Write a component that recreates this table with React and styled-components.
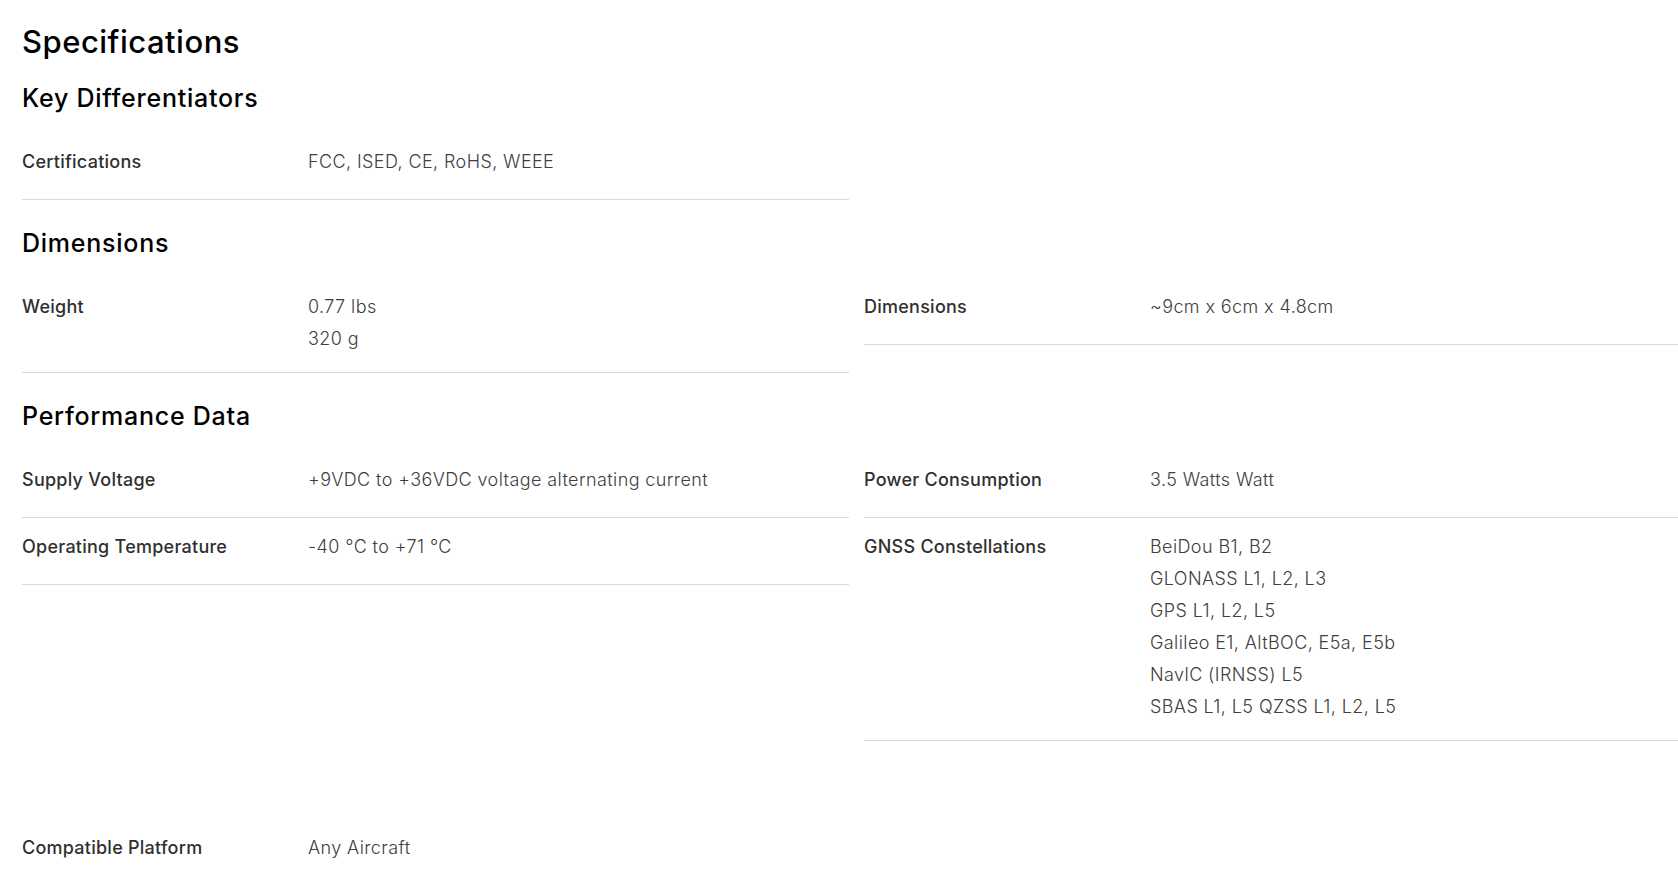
import React from "react";
import styled, { createGlobalStyle } from "styled-components";

const Global = createGlobalStyle`
  html, body { margin: 0; padding: 0; background: #fff; overflow: hidden; }
  body { font-family: Inter, Roboto, "Liberation Sans", sans-serif; }
  * { box-sizing: border-box; }
`;

const Page = styled.main`
  padding: 29px 0 0 22px;
  width: 1678px;
`;

const Title = styled.h2`
  margin: 0;
  font-size: 31px;
  line-height: 26px;
  letter-spacing: 0.5px;
  font-weight: 500;
  color: #000;
`;

const Section = styled.section`
  padding-top: 27px;
`;

const SectionTitle = styled.h3`
  margin: 0 0 19px;
  min-height: 32px;
  font-size: 25px;
  line-height: 32px;
  letter-spacing: 0.75px;
  font-weight: 500;
  color: #000;
`;

const Grid = styled.div`
  display: grid;
  grid-template-columns: 827px 1fr;
  column-gap: 15px;
  align-items: start;
`;

const Row = styled.div`
  display: flex;
  align-items: flex-start;
  padding: 13px 0 17px;
  border-bottom: 1px solid ${(p) => (p.$last ? "transparent" : "#d9d9d9")};
`;

const Label = styled.div`
  flex: 0 0 286px;
  min-height: 36px;
  font-size: 18px;
  line-height: 32px;
  letter-spacing: 0.25px;
  font-weight: 500;
  color: #303030;
`;

const Values = styled.div`
  display: flex;
  flex-direction: column;
`;

const Value = styled.span`
  font-size: 18px;
  line-height: 32px;
  letter-spacing: 0.4px;
  font-weight: 300;
  color: #404040;
`;

const sections = [
  {
    title: "Key Differentiators",
    items: [{ label: "Certifications", values: ["FCC, ISED, CE, RoHS, WEEE"] }],
  },
  {
    title: "Dimensions",
    items: [
      { label: "Weight", values: ["0.77 lbs", "320 g"] },
      { label: "Dimensions", values: ["~9cm x 6cm x 4.8cm"] },
    ],
  },
  {
    title: "Performance Data",
    items: [
      { label: "Supply Voltage", values: ["+9VDC to +36VDC voltage alternating current"] },
      { label: "Power Consumption", values: ["3.5 Watts Watt"] },
      { label: "Operating Temperature", values: ["-40 °C to +71 °C"] },
      {
        label: "GNSS Constellations",
        values: [
          "BeiDou B1, B2",
          "GLONASS L1, L2, L3",
          "GPS L1, L2, L5",
          "Galileo E1, AltBOC, E5a, E5b",
          "NavlC (IRNSS) L5",
          "SBAS L1, L5 QZSS L1, L2, L5",
        ],
      },
    ],
  },
  {
    title: "",
    items: [{ label: "Compatible Platform", values: ["Any Aircraft"], last: true }],
  },
];

export default function App() {
  return (
    <>
      <Global />
      <Page>
        <Title>Specifications</Title>
        {sections.map((s, i) => (
          <Section key={i}>
            <SectionTitle>{s.title}</SectionTitle>
            <Grid>
              {s.items.map((it) => (
                <Row key={it.label} $last={it.last}>
                  <Label>{it.label}</Label>
                  <Values>
                    {it.values.map((v) => (
                      <Value key={v}>{v}</Value>
                    ))}
                  </Values>
                </Row>
              ))}
            </Grid>
          </Section>
        ))}
      </Page>
    </>
  );
}
